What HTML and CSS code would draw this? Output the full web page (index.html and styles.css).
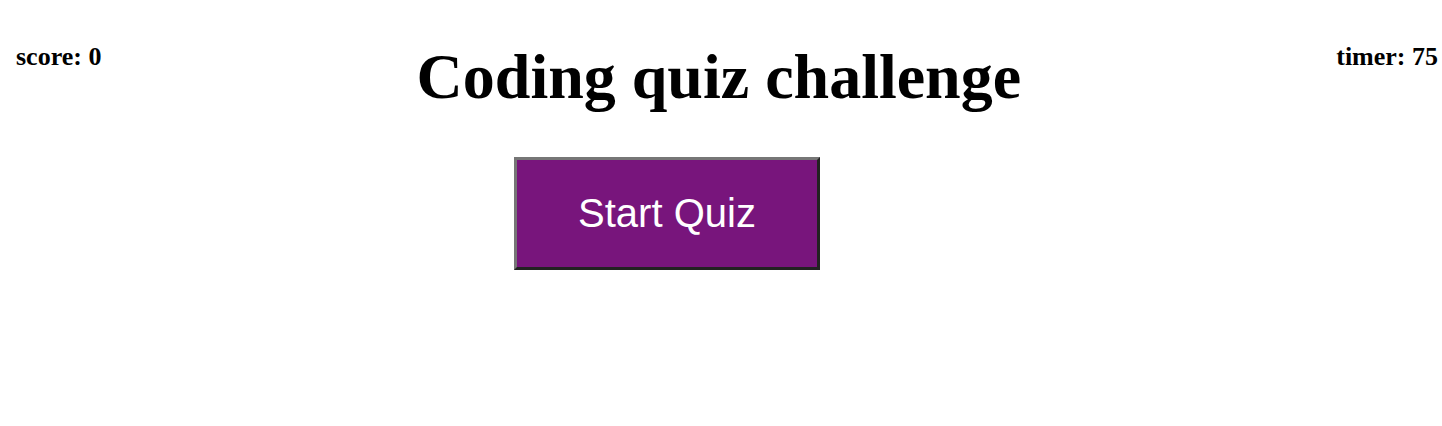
FILE: index.html
```html
<!DOCTYPE html>
<html>
<head>
<meta charset="utf-8">
<link rel="stylesheet" href="styles.css">
</head>
<body>
<header class="top">
  <h3 class="score">score: 0</h3>
  <h1 class="title">Coding quiz challenge</h1>
  <h3 class="timer">timer: 75</h3>
</header>
<main class="content">
  <button class="start">Start Quiz</button>
</main>
</body>
</html>
```
FILE: styles.css
```css
body {
  margin: 0;
  padding: 0 4px 0 16px;
  font-family: "Liberation Serif", "Times New Roman", serif;
  color: #000;
  background: #fff;
}
.top {
  display: flex;
  justify-content: space-between;
  align-items: flex-start;
}
.score, .timer {
  font-size: 26px;
  font-weight: bold;
  margin: 42px 0 0 0;
}
.title {
  font-size: 64px;
  font-weight: bold;
  margin: 40px 0 0 0;
}
.content {
  padding: 43px 0 0 498px;
}
.start {
  width: 306px;
  height: 113px;
  background: #78157c;
  color: #fff;
  font-family: "Liberation Sans", Arial, sans-serif;
  font-size: 40px;
  border: 3px solid;
  border-color: #767676 #222 #222 #767676;
  padding: 0;
}
```
